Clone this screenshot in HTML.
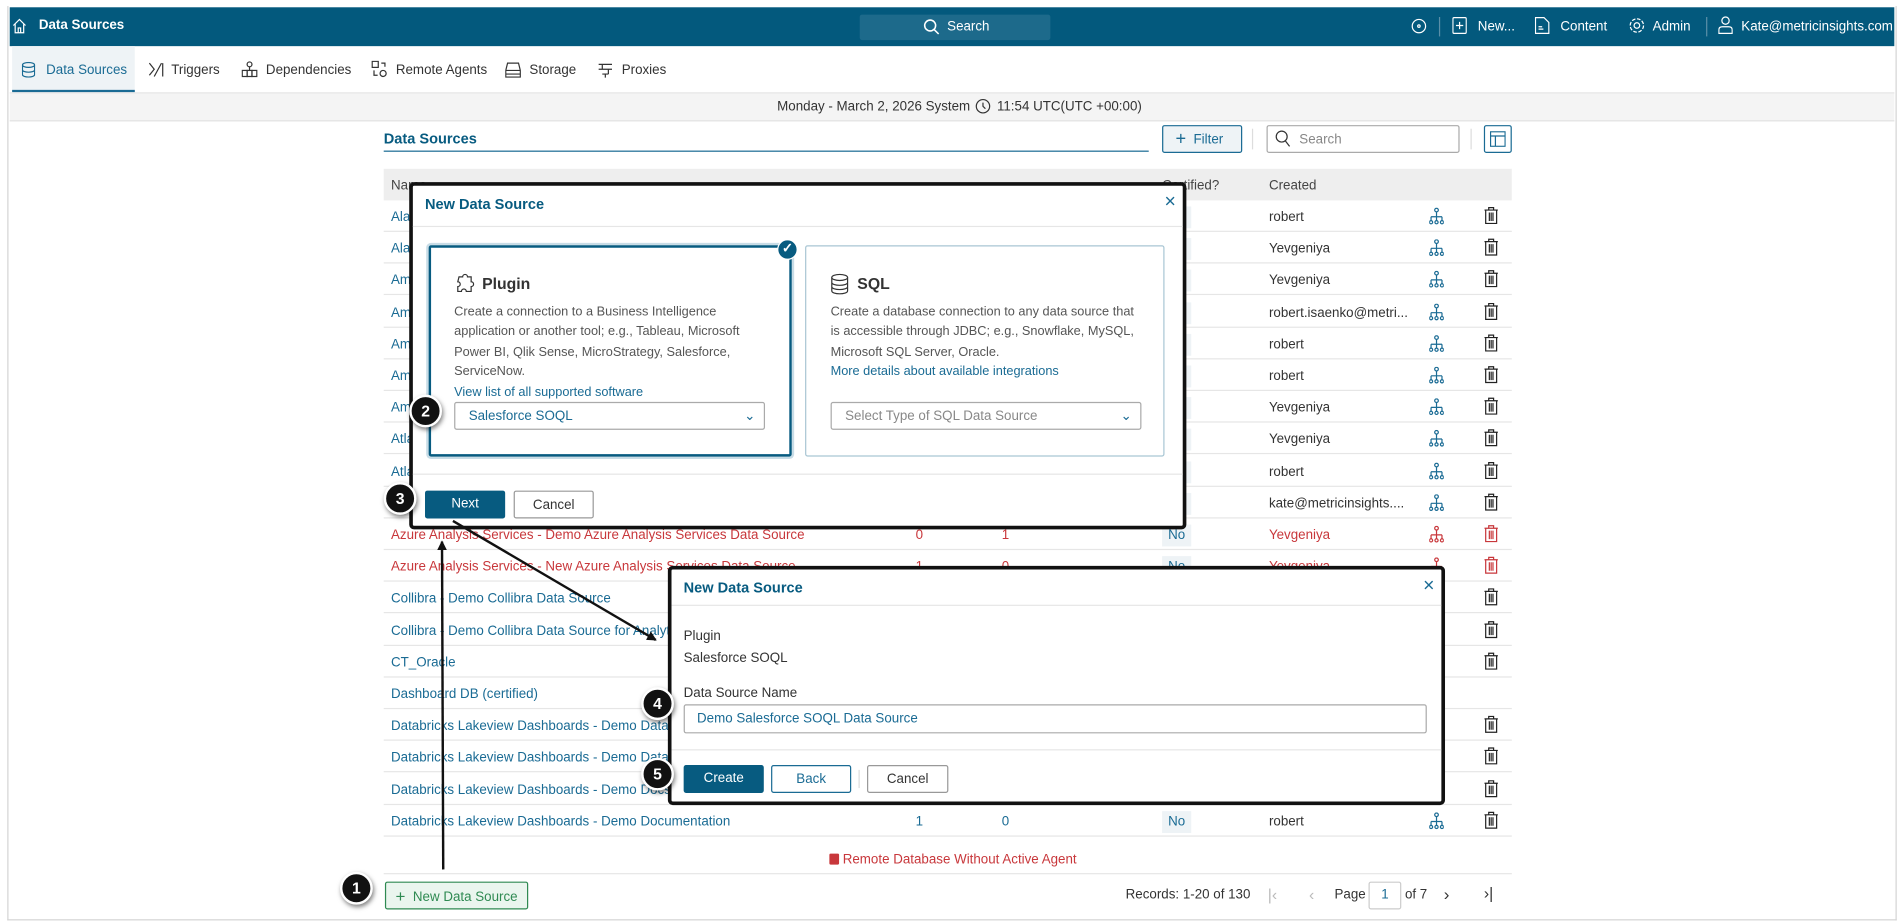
<!DOCTYPE html>
<html><head><meta charset="utf-8"><style>
*{box-sizing:border-box;margin:0;padding:0}
html,body{width:1904px;height:923px;overflow:hidden;background:#fff}
body{font-family:"Liberation Sans",sans-serif;font-size:11px;color:#333}
#w{position:absolute;left:0;top:0;width:1568px;height:760px;transform:scale(1.2143);transform-origin:0 0}
.a{position:absolute;white-space:nowrap}
.hdr{left:8px;top:6px;width:1552px;height:32px;background:#03597d;color:#fff}
.tab{top:39px;height:38px;line-height:38px;color:#333;font-size:11px}
.row{position:absolute;left:316px;width:929px;height:26px;border-bottom:1px solid #e6e6e6}
.lnk{color:#1a6b94}
.red{color:#c8373b}
.badge{position:absolute;width:27px;height:27px;border-radius:50%;background:#111;border:2px solid #fff;box-shadow:1px 2px 4px rgba(0,0,0,.5);color:#fff;font-weight:bold;font-size:13px;text-align:center;line-height:23px}
.btn{position:absolute;height:23px;line-height:22px;text-align:center;border-radius:2px;font-size:11px}
.modal{position:absolute;background:#fff;border:3px solid #111;border-radius:4px}
.mt{position:absolute;color:#075b80;font-weight:bold;font-size:12px}
.no{background:#eef3f6;color:#1a6b94;padding:3px 5px}
</style></head><body><div id="w">
<div class="a" style="left:6px;top:5px;width:1556px;height:753px;border:1px solid #d4d4d4;border-top:0"></div>
<div class="a hdr"></div>
<svg class="a" style="left:10px;top:15px" width="12" height="13" viewBox="0 0 12 13" fill="none" stroke="#fff" stroke-width="1"><path d="M1 6L6 1L11 6M2.5 5v7h7V5M5 12V8h2v4"/></svg>
<div class="a" style="left:32px;top:15px;color:#fff;font-weight:bold;font-size:11px">Data Sources</div>
<div class="a" style="left:708px;top:12px;width:157px;height:21px;background:#1d6a8b;border-radius:2px"></div>
<svg class="a" style="left:760px;top:15px" width="14" height="14" viewBox="0 0 14 14" fill="none" stroke="#fff" stroke-width="1.3"><circle cx="6" cy="6" r="4.5"/><path d="M9.3 9.3L13 13"/></svg>
<div class="a" style="left:780px;top:16px;color:#fff;font-size:11px">Search</div>
<svg class="a" style="left:1162px;top:15px" width="13" height="13" viewBox="0 0 13 13" fill="none" stroke="#fff"><circle cx="6.5" cy="6.5" r="5.5"/><circle cx="6.5" cy="6.5" r="1"/></svg>
<div class="a" style="left:1185px;top:14px;width:1px;height:16px;background:#5a8fa8"></div>
<svg class="a" style="left:1196px;top:14px" width="12" height="14" viewBox="0 0 12 14" fill="none" stroke="#fff"><rect x=".5" y=".5" width="11" height="13" rx="1"/><path d="M6 4v6M3 7h6"/></svg>
<div class="a" style="left:1217px;top:16px;color:#fff">New...</div>
<svg class="a" style="left:1264px;top:14px" width="12" height="14" viewBox="0 0 12 14" fill="none" stroke="#fff"><path d="M.5.5h7l4 4v9H.5z M3 8h3M3 10h4"/></svg>
<div class="a" style="left:1285px;top:16px;color:#fff">Content</div>
<svg class="a" style="left:1341px;top:14px" width="14" height="14" viewBox="0 0 14 14" fill="none" stroke="#fff"><circle cx="7" cy="7" r="2.3"/><circle cx="7" cy="7" r="5.5" stroke-dasharray="3 1.3"/></svg>
<div class="a" style="left:1361px;top:16px;color:#fff">Admin</div>
<div class="a" style="left:1405px;top:14px;width:1px;height:16px;background:#5a8fa8"></div>
<svg class="a" style="left:1415px;top:13px" width="12" height="15" viewBox="0 0 12 15" fill="none" stroke="#fff"><circle cx="6" cy="4" r="3"/><path d="M.5 14.5v-3q0-2.5 3-2.5h5q3 0 3 2.5v3z"/></svg>
<div class="a" style="left:1434px;top:16px;color:#fff">Kate@metricinsights.com</div>

<div class="a" style="left:10px;top:38px;width:101px;height:38px;background:#eef3f6;border-bottom:2px solid #1a6b94"></div>
<svg class="a" style="left:18px;top:51px" width="11" height="13" viewBox="0 0 11 13" fill="none" stroke="#1a6b94"><ellipse cx="5.5" cy="2.5" rx="5" ry="2"/><path d="M.5 2.5v8c0 2.6 10 2.6 10 0v-8M.5 6.5c0 2.6 10 2.6 10 0"/></svg>
<div class="a tab" style="left:38px;color:#1a6b94">Data Sources</div>
<svg class="a" style="left:122px;top:51px" width="13" height="13" viewBox="0 0 13 13" fill="none" stroke="#333"><path d="M1 1l4 5-4 5M5 12L11 1M12 1v11"/></svg>
<div class="a tab" style="left:141px">Triggers</div>
<svg class="a" style="left:199px;top:50px" width="13" height="14" viewBox="0 0 13 14" fill="none" stroke="#333"><circle cx="6.5" cy="3" r="2"/><rect x=".5" y="8" width="4" height="5"/><rect x="4.5" y="8" width="4" height="5"/><rect x="8.5" y="8" width="4" height="5"/><path d="M6.5 5v3"/></svg>
<div class="a tab" style="left:219px">Dependencies</div>
<svg class="a" style="left:306px;top:50px" width="13" height="14" viewBox="0 0 13 14" fill="none" stroke="#333"><rect x=".5" y=".5" width="5" height="5"/><circle cx="9.5" cy="10.5" r="2.5"/><path d="M8 2h3v3M5 12H2V8"/></svg>
<div class="a tab" style="left:326px">Remote Agents</div>
<svg class="a" style="left:416px;top:51px" width="13" height="13" viewBox="0 0 13 13" fill="none" stroke="#333"><path d="M2 1h9l1.5 6v5.5h-12V7z M.5 7h12 M.5 10h12"/></svg>
<div class="a tab" style="left:436px">Storage</div>
<svg class="a" style="left:492px;top:51px" width="13" height="13" viewBox="0 0 13 13" fill="none" stroke="#333"><path d="M1 2h11M1 6h11M4 2v4M9 6v4M6.5 10v3M4 10h5"/></svg>
<div class="a tab" style="left:512px">Proxies</div>

<div class="a" style="left:8px;top:76px;width:1552px;height:24px;background:#f4f4f4;border-top:1px solid #e6e6e6;border-bottom:1px solid #e3e3e3"></div>
<div class="a" style="left:640px;top:82px;color:#333">Monday - March 2, 2026 System</div>
<svg class="a" style="left:803px;top:81px" width="13" height="13" viewBox="0 0 13 13" fill="none" stroke="#333"><circle cx="6.5" cy="6.5" r="5.5"/><path d="M6.5 3.5v3l2 2"/></svg>
<div class="a" style="left:821px;top:82px;color:#333">11:54 UTC(UTC +00:00)</div>

<div class="a" style="left:316px;top:107px;color:#075b80;font-weight:bold;font-size:12px">Data Sources</div>
<div class="a" style="left:316px;top:124px;width:630px;height:1px;background:#1a6b94"></div>
<div class="a" style="left:957px;top:103px;width:66px;height:23px;background:#eef3f6;border:1px solid #1a6b94;border-radius:2px;color:#1a6b94;line-height:21px;padding-left:10px;font-size:11px"><span style="font-size:15px;vertical-align:-1px">+</span>&nbsp; Filter</div>
<div class="a" style="left:1031px;top:106px;width:1px;height:17px;background:#ddd"></div>
<div class="a" style="left:1043px;top:103px;width:159px;height:23px;border:1px solid #aaa;border-radius:2px"></div>
<svg class="a" style="left:1050px;top:107px" width="13" height="14" viewBox="0 0 13 14" fill="none" stroke="#333"><circle cx="5.5" cy="5.5" r="4.5"/><path d="M8.5 9l3.5 4.5"/></svg>
<div class="a" style="left:1070px;top:109px;color:#888">Search</div>
<div class="a" style="left:1211px;top:106px;width:1px;height:17px;background:#ddd"></div>
<div class="a" style="left:1222px;top:103px;width:23px;height:23px;border:1px solid #1a6b94;border-radius:2px"></div>
<svg class="a" style="left:1227px;top:108px" width="13" height="13" viewBox="0 0 13 13" fill="none" stroke="#1a6b94"><rect x=".5" y=".5" width="12" height="12"/><path d="M.5 4h12M4.5 4v8.5"/></svg>

<div class="a" style="left:316px;top:139px;width:929px;height:26px;background:#eeeeee"></div>
<div class="a" style="left:322px;top:147px;color:#444">Name</div>
<div class="a" style="left:957px;top:147px;color:#444">Certified?</div>
<div class="a" style="left:1045px;top:147px;color:#444">Created</div>

<div id="rows"></div>

<div class="a" style="left:683px;top:703px;width:8px;height:9px;background:#c8373b;border-radius:1px"></div>
<div class="a red" style="left:694px;top:702px">Remote Database Without Active Agent</div>
<div class="a" style="left:316px;top:719px;width:929px;height:1px;background:#e6e6e6"></div>
<div class="btn" style="left:317px;top:726px;width:118px;background:#eaf5ee;border:1px solid #2f8a52;color:#2f8a52"><span style="font-size:14px;vertical-align:-1px">+</span>&nbsp; New Data Source</div>
<div class="a" style="left:927px;top:731px;color:#333">Records: 1-20 of 130</div>
<div class="a" style="left:1044px;top:729px;color:#bbb;font-size:13px">|‹</div>
<div class="a" style="left:1078px;top:729px;color:#bbb;font-size:13px">‹</div>
<div class="a" style="left:1099px;top:731px;color:#333">Page</div>
<div class="a" style="left:1127px;top:726px;width:27px;height:23px;border:1px solid #ccc;border-radius:2px;text-align:center;line-height:21px;color:#1a6b94">1</div>
<div class="a" style="left:1157px;top:731px;color:#333">of 7</div>
<div class="a" style="left:1189px;top:728px;color:#333;font-size:14px">›</div>
<div class="a" style="left:1222px;top:728px;color:#333;font-size:13px">›|</div>

<!-- Modal 1 -->
<div class="modal" style="left:337px;top:150px;width:640px;height:286px">
 <div class="mt" style="left:10px;top:8px">New Data Source</div>
 <div class="a" style="left:619px;top:5px;font-size:16px;color:#1a6b94">×</div>
 <div class="a" style="left:0;top:33px;width:634px;height:1px;background:#e6e6e6"></div>
 <div class="a" style="left:13px;top:49px;width:299px;height:174px;border:2px solid #075b80;box-shadow:0 0 0 2px #c8dce6;border-radius:2px"></div>
 <div class="a" style="left:300px;top:44px;width:17px;height:17px;border-radius:50%;background:#075b80;border:1.5px solid #fff;color:#fff;font-size:11px;text-align:center;line-height:14px;font-weight:bold">✓</div>
 <svg class="a" style="left:34px;top:72px" width="17" height="18" viewBox="0 0 17 18" fill="none" stroke="#333"><path d="M4 3h3a2 2 0 014 0h3v4a2 2 0 010 4v4h-4a2 2 0 00-4 0H3v-4a2 2 0 000-4z"/></svg>
 <div class="a" style="left:57px;top:73px;font-size:13px;font-weight:bold;color:#333">Plugin</div>
 <div class="a" style="left:34px;top:96px;color:#555;line-height:16.4px;font-size:10.5px">Create a connection to a Business Intelligence<br>application or another tool; e.g., Tableau, Microsoft<br>Power BI, Qlik Sense, MicroStrategy, Salesforce,<br>ServiceNow.<br><span class="lnk">View list of all supported software</span></div>
 <div class="a" style="left:34px;top:178px;width:256px;height:23px;border:1px solid #aaa;border-radius:2px;padding-left:11px;line-height:22px;color:#1a6b94">Salesforce SOQL<span style="position:absolute;right:7px;color:#1a6b94">⌄</span></div>
 <div class="a" style="left:323px;top:49px;width:296px;height:174px;border:1px solid #a9c6d4;border-radius:2px"></div>
 <svg class="a" style="left:344px;top:72px" width="15" height="18" viewBox="0 0 15 18" fill="none" stroke="#333"><ellipse cx="7.5" cy="3.5" rx="6.5" ry="2.5"/><path d="M1 3.5v11c0 3.3 13 3.3 13 0v-11M1 7.5c0 3.3 13 3.3 13 0M1 11c0 3.3 13 3.3 13 0"/></svg>
 <div class="a" style="left:366px;top:73px;font-size:13px;font-weight:bold;color:#333">SQL</div>
 <div class="a" style="left:344px;top:96px;color:#555;line-height:16.4px;font-size:10.5px">Create a database connection to any data source that<br>is accessible through JDBC; e.g., Snowflake, MySQL,<br>Microsoft SQL Server, Oracle.<br><span class="lnk">More details about available integrations</span></div>
 <div class="a" style="left:344px;top:178px;width:256px;height:23px;border:1px solid #aaa;border-radius:2px;padding-left:11px;line-height:22px;color:#888">Select Type of SQL Data Source<span style="position:absolute;right:7px;color:#1a6b94">⌄</span></div>
 <div class="a" style="left:0;top:237px;width:634px;height:1px;background:#e6e6e6"></div>
 <div class="btn" style="left:10px;top:251px;width:66px;background:#075b80;color:#fff">Next</div>
 <div class="btn" style="left:83px;top:251px;width:66px;border:1px solid #999;color:#333">Cancel</div>
</div>

<!-- Modal 2 -->
<div class="modal" style="left:550px;top:466px;width:640px;height:197px">
 <div class="mt" style="left:10px;top:8px">New Data Source</div>
 <div class="a" style="left:619px;top:5px;font-size:16px;color:#1a6b94">×</div>
 <div class="a" style="left:0;top:29px;width:634px;height:1px;background:#e6e6e6"></div>
 <div class="a" style="left:10px;top:49px;color:#333">Plugin</div>
 <div class="a" style="left:10px;top:67px;color:#333">Salesforce SOQL</div>
 <div class="a" style="left:10px;top:96px;color:#333">Data Source Name</div>
 <div class="a" style="left:10px;top:111px;width:612px;height:24px;border:1px solid #aaa;border-radius:2px;padding-left:10px;line-height:22px;color:#1a6b94">Demo Salesforce SOQL Data Source</div>
 <div class="a" style="left:0;top:148px;width:634px;height:1px;background:#e6e6e6"></div>
 <div class="btn" style="left:10px;top:161px;width:66px;background:#075b80;color:#fff">Create</div>
 <div class="btn" style="left:82px;top:161px;width:66px;border:1px solid #1a6b94;color:#1a6b94">Back</div>
 <div class="a" style="left:154px;top:165px;width:1px;height:15px;background:#ddd"></div>
 <div class="btn" style="left:161px;top:161px;width:67px;border:1px solid #999;color:#333">Cancel</div>
</div>

<svg class="a" style="left:0;top:0" width="1568" height="760"><defs><marker id="ar" markerWidth="8" markerHeight="8" refX="7" refY="4" orient="auto" markerUnits="userSpaceOnUse"><path d="M0 0L8 4L0 8z" fill="#111"/></marker></defs>
<line x1="365" y1="716" x2="364" y2="446" stroke="#111" stroke-width="2" marker-end="url(#ar)"/>
<line x1="373" y1="429" x2="540" y2="527" stroke="#111" stroke-width="2" marker-end="url(#ar)"/></svg>

<div class="badge" style="left:337px;top:325px">2</div>
<div class="badge" style="left:316px;top:397px">3</div>
<div class="badge" style="left:280px;top:718px">1</div>
<div class="badge" style="left:528px;top:566px">4</div>
<div class="badge" style="left:528px;top:624px">5</div>

<script>
var names=[["Alation",0],["Alation",0],["Amazon",0],["Amazon",0],["Amazon",0],["Amazon",0],["Amazon",0],["Atlan",0],["Atlan",0],["Azure",0],
["Azure Analysis Services - Demo Azure Analysis Services Data Source",1],["Azure Analysis Services - New Azure Analysis Services Data Source",1],
["Collibra - Demo Collibra Data Source",0],["Collibra - Demo Collibra Data Source for Analytics",0],["CT_Oracle",0],["Dashboard DB (certified)",0],
["Databricks Lakeview Dashboards - Demo Databricks",0],["Databricks Lakeview Dashboards - Demo Databricks",0],["Databricks Lakeview Dashboards - Demo Docs",0],["Databricks Lakeview Dashboards - Demo Documentation",0]];
var cr=["robert","Yevgeniya","Yevgeniya","robert.isaenko@metri...","robert","robert","Yevgeniya","Yevgeniya","robert","kate@metricinsights....","Yevgeniya","Yevgeniya","","","","","","","","robert"];
var h="";
for(var i=0;i<20;i++){var t=165+i*26.2;var c=names[i][1]?"red":"lnk";
h+='<div class="row" style="top:'+t+'px"></div>';
h+='<div class="a '+c+'" style="left:322px;top:'+(t+8)+'px">'+names[i][0]+'</div>';
if(i>=10){h+='<div class="a '+c+'" style="left:754px;top:'+(t+8)+'px">'+(i==10?'0':'1')+'</div><div class="a '+c+'" style="left:825px;top:'+(t+8)+'px">'+(i==10?'1':'0')+'</div>';}
h+='<div class="a no" style="left:957px;top:'+(t+5)+'px">No</div>';
h+='<div class="a '+(names[i][1]?'red':'')+'" style="left:1045px;top:'+(t+8)+'px">'+cr[i]+'</div>';
var ic=names[i][1]?"#c8373b":"#1a6b94";
h+='<svg class="a" style="left:1177px;top:'+(t+6)+'px" width="12" height="14" viewBox="0 0 12 14" fill="none" stroke="'+ic+'"><circle cx="6" cy="2" r="1.5"/><path d="M6 3.5v4M1.5 7.5h9M1.5 7.5v3M6 7.5v3M10.5 7.5v3"/><circle cx="1.5" cy="12" r="1.3"/><circle cx="6" cy="12" r="1.3"/><circle cx="10.5" cy="12" r="1.3"/></svg>';
if(i!=15)h+='<svg class="a" style="left:1222px;top:'+(t+5)+'px" width="12" height="15" viewBox="0 0 12 15" fill="none" stroke="'+(names[i][1]?"#c8373b":"#222")+'"><path d="M.5 3h11M4 3V1h4v2M1.5 3v11h9V3M4.5 5v7M6 5v7M7.5 5v7"/></svg>';}
document.getElementById("rows").outerHTML=h;
</script>
</div></body></html>
